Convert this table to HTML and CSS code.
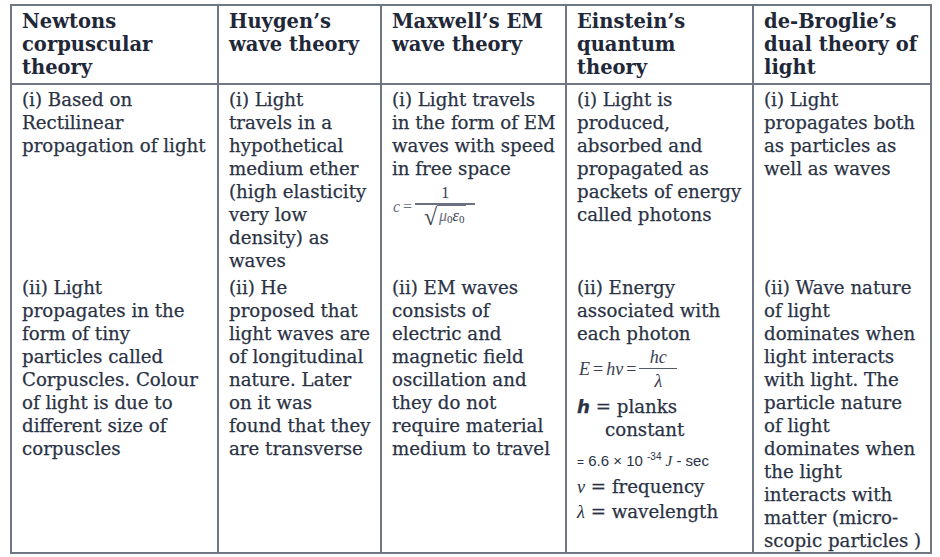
FILE: index.html
```html
<!DOCTYPE html>
<html>
<head>
<meta charset="utf-8">
<link rel="stylesheet" href="styles.css">
</head>
<body>
<table class="theories">
  <colgroup>
    <col class="c1"><col class="c2"><col class="c3"><col class="c4"><col class="c5">
  </colgroup>
  <thead>
    <tr class="head">
      <th>Newtons<br>corpuscular<br>theory</th>
      <th>Huygen’s<br>wave theory</th>
      <th>Maxwell’s EM<br>wave theory</th>
      <th>Einstein’s<br>quantum<br>theory</th>
      <th>de-Broglie’s<br>dual theory of<br>light</th>
    </tr>
  </thead>
  <tbody>
    <tr class="r1">
      <td>(i) Based on<br>Rectilinear<br>propagation of light</td>
      <td>(i) Light<br>travels in a<br>hypothetical<br>medium ether<br>(high elasticity<br>very low<br>density) as<br>waves</td>
      <td>(i) Light travels<br>in the form of EM<br>waves with speed<br>in free space
        <div class="eq eq-c">
          <span class="m">c</span><span class="op">=</span>
          <span class="frac">
            <span class="num">1</span>
            <span class="den"><span class="rad">√</span><span class="under"><span class="m">μ</span><sub>0</sub><span class="m">ε</span><sub>0</sub></span></span>
          </span>
        </div>
      </td>
      <td>(i) Light is<br>produced,<br>absorbed and<br>propagated as<br>packets of energy<br>called photons</td>
      <td>(i) Light<br>propagates both<br>as particles as<br>well as waves</td>
    </tr>
    <tr class="r2">
      <td>(ii) Light<br>propagates in the<br>form of tiny<br>particles called<br>Corpuscles. Colour<br>of light is due to<br>different size of<br>corpuscles</td>
      <td>(ii) He<br>proposed that<br>light waves are<br>of longitudinal<br>nature. Later<br>on it was<br>found that they<br>are transverse</td>
      <td>(ii) EM waves<br>consists of<br>electric and<br>magnetic field<br>oscillation and<br>they do not<br>require material<br>medium to travel</td>
      <td>(ii) Energy<br>associated with<br>each photon
        <div class="eq eq-e">
          <span class="m">E</span><span class="op">=</span><span class="m">hν</span><span class="op">=</span>
          <span class="frac frac-e">
            <span class="num m">hc</span>
            <span class="den m">λ</span>
          </span>
        </div>
        <div class="def"><span class="sym">h</span> = planks<br><span class="indent">constant</span></div>
        <div class="val"><span class="small-op">=</span> 6.6 × 10 <sup>-34</sup> <span class="m">J</span> - sec</div>
        <div class="def tight"><span class="m">ν</span> = frequency</div>
        <div class="def tight"><span class="m">λ</span> = wavelength</div>
      </td>
      <td>(ii) Wave nature<br>of light<br>dominates when<br>light interacts<br>with light. The<br>particle nature<br>of light<br>dominates when<br>the light<br>interacts with<br>matter (micro-<br>scopic particles )</td>
    </tr>
  </tbody>
</table>
</body>
</html>
```

FILE: styles.css
```css
html, body {
  margin: 0;
  padding: 0;
  background: #ffffff;
}
body {
  padding: 4px 10px 0 10px;
  font-family: "DejaVu Serif", "Liberation Serif", serif;
  color: #2a3244;
}
.theories {
  width: 920px;
  table-layout: fixed;
  border-collapse: collapse;
  border: 2px solid #6f7784;
}
.c1 { width: 207px; }
.c2 { width: 163px; }
.c3 { width: 185px; }
.c4 { width: 187px; }
.c5 { width: 178px; }

.theories th,
.theories td {
  vertical-align: top;
  text-align: left;
  white-space: nowrap;
  overflow: hidden;
  padding: 3px 2px 0 10px;
  border-left: 2px solid #6f7784;
  border-right: 2px solid #6f7784;
  line-height: 23px;
}
.theories th {
  font-size: 19.5px;
  font-weight: bold;
  color: #1f2838;
  border-bottom: 2px solid #6f7784;
  height: 73px;
  padding-top: 4px;
}
.theories td {
  font-size: 18.2px;
  -webkit-text-stroke: 0.25px #2a3244;
}
.r1 td { height: 185px; }
.r2 td { height: 270px; }

.m { font-family: "Liberation Serif", serif; font-style: italic; -webkit-text-stroke: 0; }
.eq {
  display: flex;
  align-items: center;
  font-family: "Liberation Serif", serif;
  color: #3a4050;
  -webkit-text-stroke: 0;
}
.eq-c {
  font-size: 16px;
  margin: 3px 0 0 1px;
}
.eq-c .m:first-child { color: #6a7080; }
.eq-c .op { color: #6a7080; }
.op { padding: 0 3px; }
.frac {
  display: inline-flex;
  flex-direction: column;
  align-items: center;
  line-height: 20px;
}
.num {
  display: block;
  border-bottom: 2px solid #6a7180;
  padding: 0 4px;
  min-width: 52px;
  text-align: center;
}
.den { display: flex; align-items: flex-end; line-height: 24px; }
.rad { font-size: 24px; line-height: 24px; }
.under { border-top: 1px solid #6a7180; padding: 0 2px; line-height: 20px; }
sub { font-size: 11px; vertical-align: -2px; }

.eq-e {
  font-size: 18px;
  margin: 1px 0 2px 2px;
}
.frac-e { line-height: 22px; }
.frac-e .num {
  min-width: 30px;
  border-bottom: 1px solid #555b66;
}
.def { line-height: 23px; }
.def.tight { line-height: 24.5px; }
.sym { font-family: "DejaVu Sans", sans-serif; font-style: italic; font-weight: bold; }
.indent { padding-left: 28px; }
.val {
  font-family: "Liberation Sans", sans-serif;
  font-size: 15px;
  line-height: 26px;
  padding-top: 3px;
  -webkit-text-stroke: 0;
}
.val sup { font-size: 10px; }
.small-op { font-size: 12px; }
```
